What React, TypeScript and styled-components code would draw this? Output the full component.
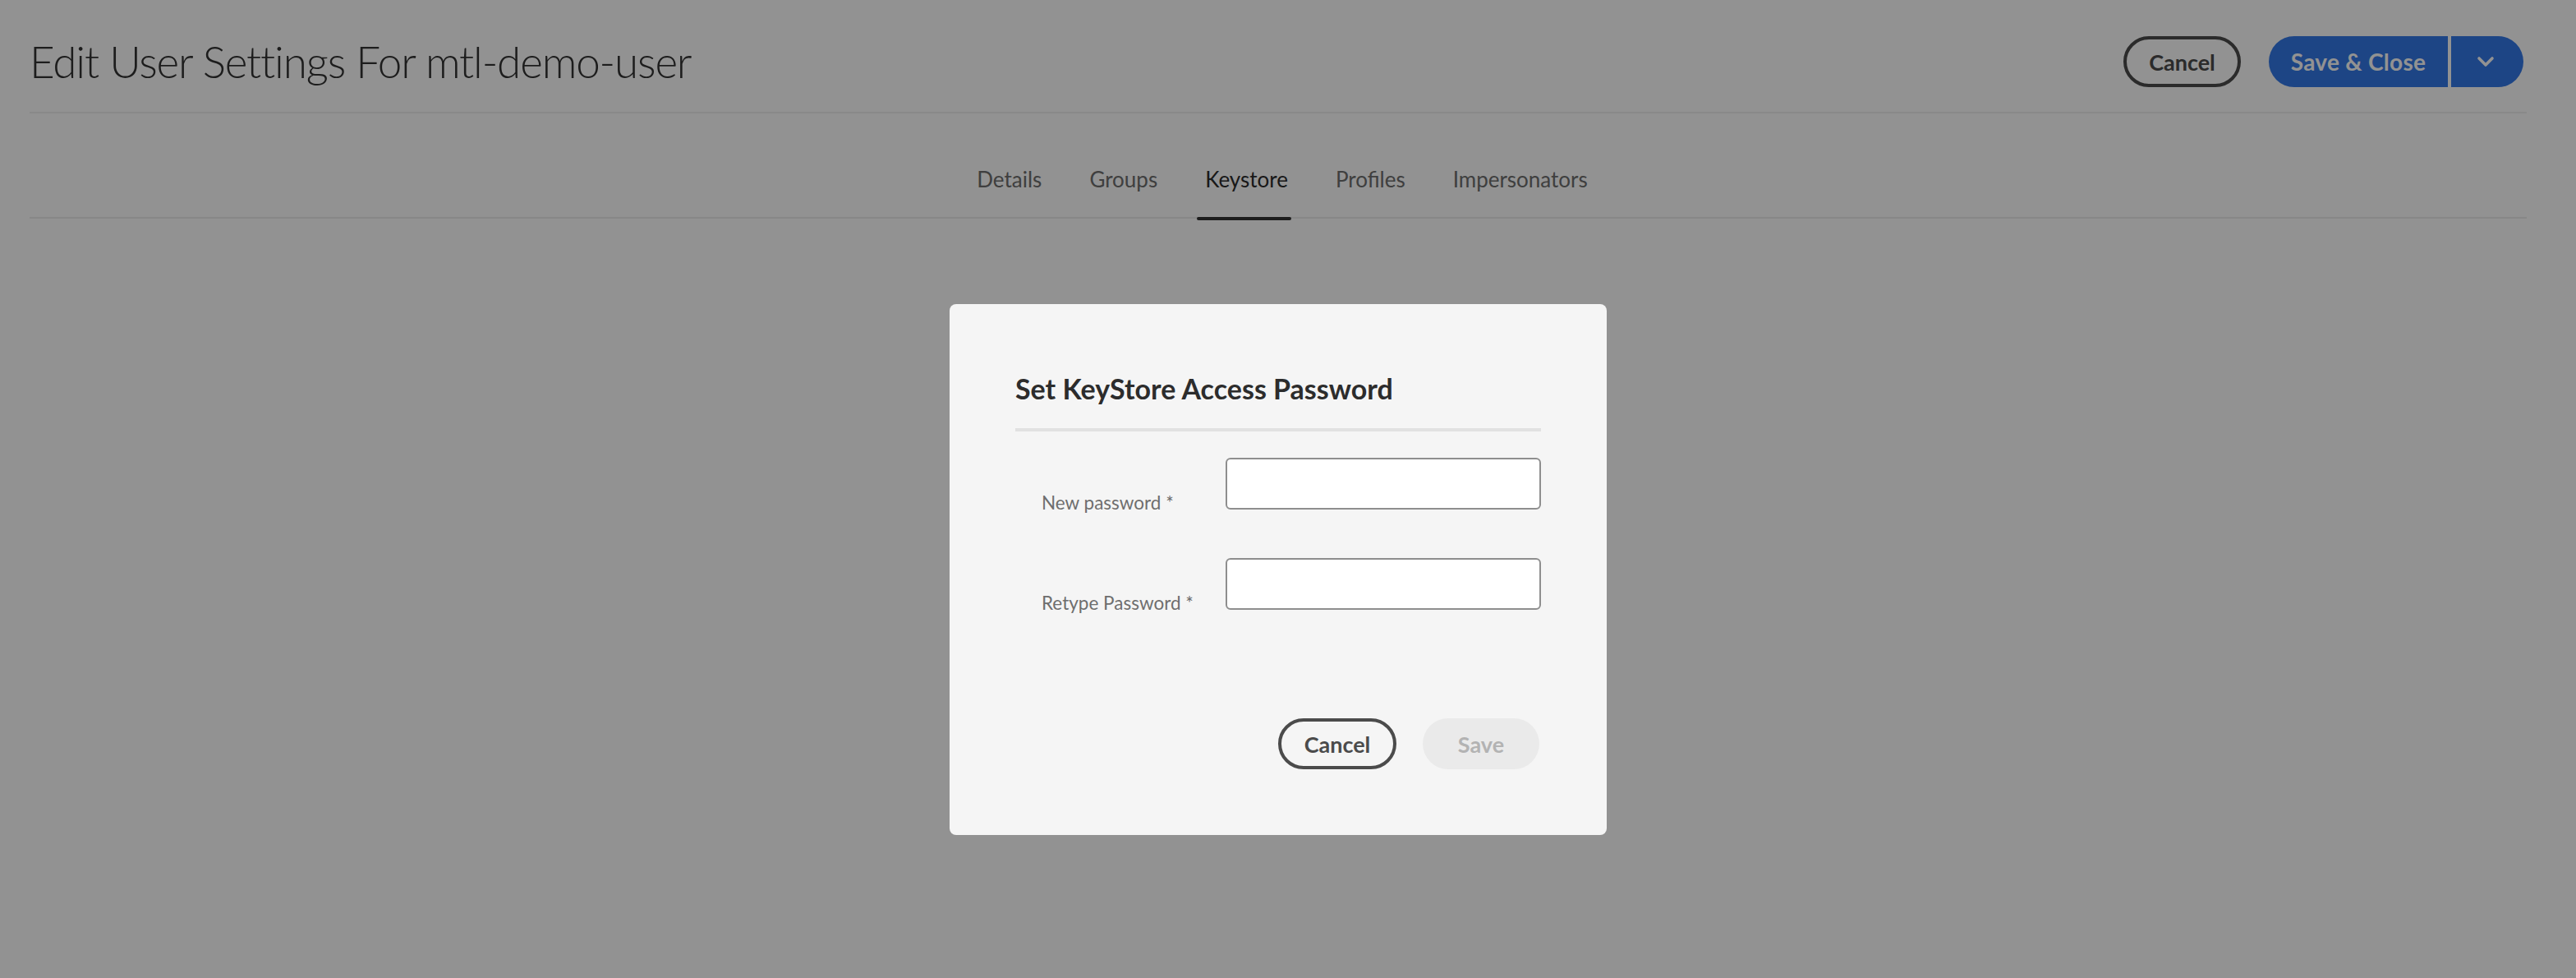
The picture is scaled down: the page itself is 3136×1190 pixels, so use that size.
import React from "react";
import styled, { createGlobalStyle } from "styled-components";

const GlobalStyle = createGlobalStyle`
	html, body {
		margin: 0;
		padding: 0;
		background: #ffffff;
		font-family: Lato, "Open Sans", "Liberation Sans", sans-serif;
	}
	* {
		box-sizing: border-box;
	}
`;

const tabs = ["Details", "Groups", "Keystore", "Profiles", "Impersonators"];

const App = () => {
	return (
		<>
			<GlobalStyle />
			<Page>
				<Header>
					<Title>Edit User Settings For mtl-demo-user</Title>
					<Actions>
						<PillButton $variant="outline" $w={143}>
							Cancel
						</PillButton>
						<SplitGroup>
							<SplitMain>Save &amp; Close</SplitMain>
							<SplitToggle aria-label="More actions">
								<svg width="22" height="14" viewBox="0 0 22 14" fill="none">
									<polyline
										points="3,3 11,11 19,3"
										stroke="#ffffff"
										strokeWidth="3.6"
										strokeLinecap="round"
										strokeLinejoin="round"
									/>
								</svg>
							</SplitToggle>
						</SplitGroup>
					</Actions>
				</Header>
				<TabBar>
					{tabs.map((t) => (
						<Tab key={t} $active={t === "Keystore"}>
							{t}
						</Tab>
					))}
				</TabBar>
			</Page>

			<Backdrop>
				<Dialog>
					<DialogTitle>Set KeyStore Access Password</DialogTitle>
					<Form>
						<Field>
							<Label>New password *</Label>
							<Input type="password" />
						</Field>
						<Field>
							<Label>Retype Password *</Label>
							<Input type="password" />
						</Field>
					</Form>
					<Footer>
						<PillButton $variant="outline" $w={144}>
							Cancel
						</PillButton>
						<PillButton $variant="disabled" $w={142} disabled>
							Save
						</PillButton>
					</Footer>
				</Dialog>
			</Backdrop>
		</>
	);
};

export default App;

const Page = styled.div`
	padding: 0 60px 0 36px;
	min-height: 1190px;
`;

const Header = styled.header`
	display: flex;
	align-items: center;
	justify-content: space-between;
	padding: 44px 4px 30px 0;
	border-bottom: 2px solid #efefef;
`;

const Title = styled.h1`
	margin: 0;
	font-size: 53px;
	line-height: 62px;
	font-weight: 300;
	color: #333333;
	letter-spacing: -1.15px;
`;

const Actions = styled.div`
	display: flex;
	align-items: center;
	gap: 34px;
`;

interface PillProps {
	$variant: "outline" | "disabled";
	$w: number;
}

const PillButton = styled.button<PillProps>`
	display: inline-flex;
	align-items: center;
	justify-content: center;
	width: ${(p) => p.$w}px;
	height: 62px;
	padding: 0;
	border-radius: 31px;
	font-family: inherit;
	font-size: 27px;
	font-weight: 700;
	cursor: pointer;
	border: 4px solid ${(p) => (p.$variant === "outline" ? "#4b4b4b" : "transparent")};
	background: ${(p) => (p.$variant === "outline" ? "transparent" : "#eaeaea")};
	color: ${(p) => (p.$variant === "outline" ? "#4b4b4b" : "#b3b3b3")};
`;

const SplitGroup = styled.div`
	display: flex;
	gap: 4px;
`;

const SplitMain = styled.button`
	width: 218px;
	height: 62px;
	border: none;
	border-radius: 31px 0 0 31px;
	background: #3479e8;
	color: #ffffff;
	font-family: inherit;
	font-size: 28px;
	font-weight: 700;
	letter-spacing: 0.3px;
	padding: 0;
`;

const SplitToggle = styled.button`
	display: flex;
	align-items: center;
	justify-content: center;
	width: 88px;
	height: 62px;
	border: none;
	border-radius: 0 31px 31px 0;
	background: #3479e8;
	padding: 0 4px 0 0;
`;

const TabBar = styled.nav`
	display: flex;
	justify-content: center;
	gap: 44px;
	height: 128px;
	border-bottom: 2px solid #ececec;
	padding-left: 4px;
`;

const Tab = styled.div<{ $active: boolean }>`
	position: relative;
	align-self: flex-start;
	padding: 64px 4px 33px 10px;
	font-size: 26px;
	line-height: 33px;
	color: ${(p) => (p.$active ? "#2c2c2c" : "#6e6e6e")};

	&::after {
		content: "";
		position: absolute;
		left: 0;
		right: 0;
		bottom: 0;
		height: 4px;
		border-radius: 2px;
		background: ${(p) => (p.$active ? "#333333" : "transparent")};
	}
`;

const Backdrop = styled.div`
	position: fixed;
	inset: 0;
	display: flex;
	justify-content: center;
	align-items: flex-start;
	padding: 370px 60px 0 36px;
	background: rgba(0, 0, 0, 0.4275);
`;

const Dialog = styled.div`
	width: 800px;
	padding: 83px 80px 80px;
	background: #f5f5f5;
	border-radius: 8px;
`;

const DialogTitle = styled.h2`
	margin: 0;
	padding-bottom: 28px;
	border-bottom: 4px solid #e1e1e1;
	font-size: 34px;
	line-height: 40px;
	font-weight: 700;
	color: #2c2c2c;
`;

const Form = styled.div`
	display: flex;
	flex-direction: column;
	gap: 59px;
	padding-top: 32px;
`;

const Field = styled.div`
	display: grid;
	grid-template-columns: 256px 1fr;
	align-items: end;
`;

const Label = styled.label`
	padding-left: 32px;
	margin-bottom: -6px;
	font-size: 22.5px;
	line-height: 28px;
	color: #6e6e6e;
`;

const Input = styled.input`
	width: 384px;
	height: 63px;
	border: 2px solid #8e8e8e;
	border-radius: 6px;
	background: #ffffff;
	font-family: inherit;
	font-size: 24px;
	padding: 0 16px;
	outline: none;
`;

const Footer = styled.div`
	display: flex;
	justify-content: flex-end;
	gap: 32px;
	margin-top: 132px;
	padding-right: 2px;
`;
